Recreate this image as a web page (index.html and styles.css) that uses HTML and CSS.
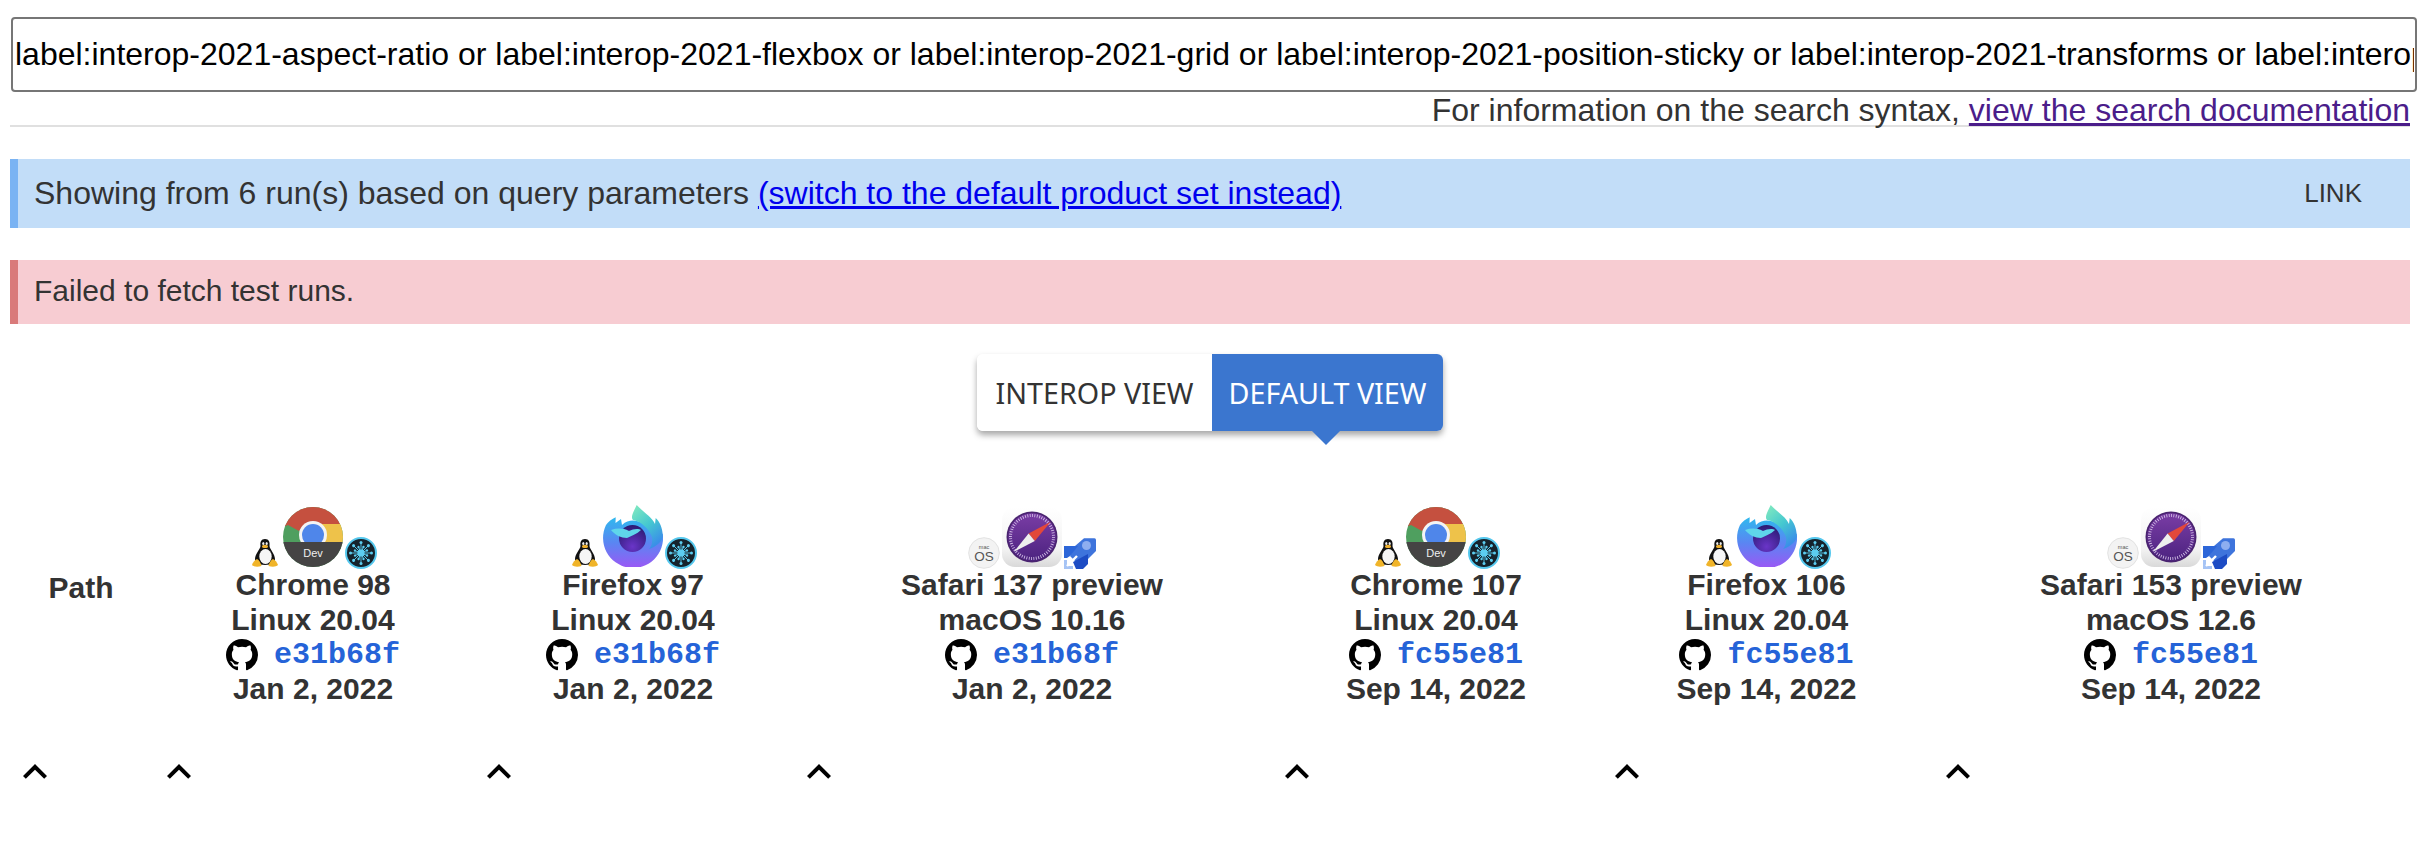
FILE: index.html
```html
<!DOCTYPE html>
<html lang="en">
<head>
<meta charset="utf-8">
<title>web-platform-tests dashboard</title>
<link rel="stylesheet" href="styles.css">
</head>
<body>
<svg class="sprite" aria-hidden="true">
  <defs>
    <linearGradient id="ffBody" x1="0" y1="0" x2="0" y2="1"><stop offset="0" stop-color="#2fb9ee"/><stop offset=".5" stop-color="#5a86f2"/><stop offset="1" stop-color="#9a58f5"/></linearGradient>
    <linearGradient id="ffFlame" x1="0" y1="0" x2=".6" y2="1"><stop offset="0" stop-color="#86ecbe"/><stop offset=".55" stop-color="#45c8d0"/><stop offset="1" stop-color="#3a8fe8"/></linearGradient>
    <radialGradient id="ffGlobe" cx=".5" cy=".8" r=".8"><stop offset="0" stop-color="#6a35c8"/><stop offset="1" stop-color="#2a1a72"/></radialGradient>
    <linearGradient id="sfTile" x1="0" y1="0" x2="0" y2="1"><stop offset="0" stop-color="#ffffff"/><stop offset=".7" stop-color="#f3f3f3"/><stop offset="1" stop-color="#d9d9d9"/></linearGradient>
    <linearGradient id="sfDisc" x1="0" y1="0" x2="0" y2="1"><stop offset="0" stop-color="#7a3da5"/><stop offset="1" stop-color="#4c2380"/></linearGradient>
    <clipPath id="chClip"><circle cx="30" cy="30" r="30"/></clipPath>
    <clipPath id="chBlue"><rect x="0" y="0" width="60" height="35"/></clipPath>
    <g id="tcSpoke"><line x1="16" y1="16" x2="16" y2="5.5" stroke="#5ccdf0" stroke-width=".9"/><circle cx="16" cy="5.5" r="1.5" fill="#5ccdf0"/></g>
    <g id="tcSpokeShort"><line x1="16" y1="16" x2="16" y2="9.5" stroke="#5ccdf0" stroke-width=".9"/><circle cx="16" cy="9.5" r="1.2" fill="#5ccdf0"/></g>
  </defs>
  <symbol id="i-tux" viewBox="0 0 32 32">
    <path d="M16 2C12 2 11 5 11.5 9C11.5 12 6 17 6 22C6 25 9 28 16 28C23 28 26 25 26 22C26 17 20.5 12 20.5 9C21 5 20 2 16 2Z" fill="#111"/>
    <ellipse cx="16.5" cy="19.5" rx="6.2" ry="7.6" fill="#f6f6f6"/>
    <ellipse cx="14.3" cy="6.4" rx="1.1" ry="1.5" fill="#eee"/>
    <ellipse cx="17.7" cy="6.4" rx="1.1" ry="1.5" fill="#eee"/>
    <ellipse cx="16" cy="9.4" rx="3" ry="1.6" fill="#eeb02f"/>
    <path d="M3 28C4 25 6 23 8 22C10 23 12 26 12.5 29C9 30 5 30 3 28Z" fill="#f0b429"/>
    <path d="M29 28C28 25 26 23 24 22C22 23 20 26 19.5 29C23 30 27 30 29 28Z" fill="#f0b429"/>
  </symbol>
  <symbol id="i-taskcluster" viewBox="0 0 32 32">
    <circle cx="16" cy="16" r="15" fill="#16232c" stroke="#55c8ee" stroke-width="2"/>
    <use href="#tcSpoke"/>
    <use href="#tcSpoke" transform="rotate(45 16 16)"/>
    <use href="#tcSpoke" transform="rotate(90 16 16)"/>
    <use href="#tcSpoke" transform="rotate(135 16 16)"/>
    <use href="#tcSpoke" transform="rotate(180 16 16)"/>
    <use href="#tcSpoke" transform="rotate(225 16 16)"/>
    <use href="#tcSpoke" transform="rotate(270 16 16)"/>
    <use href="#tcSpoke" transform="rotate(315 16 16)"/>
    <use href="#tcSpokeShort" transform="rotate(22 16 16)"/>
    <use href="#tcSpokeShort" transform="rotate(67 16 16)"/>
    <use href="#tcSpokeShort" transform="rotate(112 16 16)"/>
    <use href="#tcSpokeShort" transform="rotate(157 16 16)"/>
    <use href="#tcSpokeShort" transform="rotate(202 16 16)"/>
    <use href="#tcSpokeShort" transform="rotate(247 16 16)"/>
    <use href="#tcSpokeShort" transform="rotate(292 16 16)"/>
    <use href="#tcSpokeShort" transform="rotate(337 16 16)"/>
    <circle cx="16" cy="16" r="3.6" fill="#5ccdf0"/>
  </symbol>
  <symbol id="i-chrome" viewBox="0 0 60 60">
    <g clip-path="url(#chClip)">
      <rect width="60" height="60" fill="#4f9f5f"/>
      <path d="M30 17H60V35H30Z" fill="#eec24a"/>
      <path d="M0 0H60V17H30L18 22L16 24L5 18L0 20Z" fill="#c5503f"/>
      <rect y="35" width="60" height="25" fill="#454444"/>
      <g clip-path="url(#chBlue)">
        <circle cx="30" cy="28" r="14" fill="#f4f4f4"/>
        <circle cx="30" cy="28" r="11" fill="#4f86ea"/>
      </g>
    </g>
  </symbol>
  <symbol id="i-firefox" viewBox="0 0 60 62">
    <path d="M3 20C5 17 9 14 12.7 12.3L12.5 18L18 14L19 20C24 15 30 15 34 16L47 20L59.8 29A30 30 0 1 1 3 20Z" fill="url(#ffBody)"/>
    <path d="M33.7 0C31 6 27 12 30 15C38 16 46 24 49 32C50 37 48 42 46 44C52 42 58 38 59.7 32C60 24 57 17 52.7 13L52 19C49 12 40 7 33.7 0Z" fill="url(#ffFlame)"/>
    <circle cx="29.5" cy="33.5" r="13.5" fill="url(#ffGlobe)"/>
    <path d="M8 25C14 23 20 23 26 26C30 24 35 23 38 25C34 29 28 31 24 33C18 33 12 30 8 25Z" fill="#5fd6ea"/>
  </symbol>
  <symbol id="i-safari" viewBox="0 0 60 60">
    <rect width="60" height="60" rx="13" fill="url(#sfTile)"/>
    <circle cx="30" cy="30" r="25.5" fill="#4a2470"/>
    <circle cx="30" cy="30" r="23.8" fill="url(#sfDisc)"/>
    <circle class="safari-ticks" cx="30" cy="30" r="21.5"/>
    <path d="M48.7 14.7L26.6 26.5L32.8 34Z" fill="#e2483a"/>
    <path d="M12 44.7L26.6 26.5L32.8 34Z" fill="#eeeeee"/>
  </symbol>
  <symbol id="i-macos" viewBox="0 0 32 32">
    <circle cx="16" cy="16" r="15.3" fill="#f3f3f3" stroke="#e2e2e2"/>
  </symbol>
  <symbol id="i-azure" viewBox="0 0 32 32">
    <path d="M20 1.3H30.5Q32 1.3 32 3V14L24 22L14 27L6 19L11 9Z" fill="#3e74dc"/>
    <path d="M0 9H14L6 19L3 21H0Z" fill="#2d66d8"/>
    <path d="M24 17V27L19 32H12L9 25Z" fill="#1d4cc4"/>
    <circle cx="22.5" cy="8.5" r="4.5" fill="#8eaef0"/>
    <path d="M0 23H3V29H9V32H0Z" fill="#a6c4f5"/>
    <path d="M3 29L13 19" stroke="#ffffff" stroke-width="2.4" fill="none"/>
  </symbol>
  <symbol id="i-github" viewBox="0 0 16 16">
    <path d="M8 0C3.58 0 0 3.58 0 8c0 3.54 2.29 6.53 5.47 7.59.4.07.55-.17.55-.38 0-.19-.01-.82-.01-1.49-2.01.37-2.53-.49-2.69-.94-.09-.23-.48-.94-.82-1.13-.28-.15-.68-.52-.01-.53.63-.01 1.08.58 1.23.82.72 1.21 1.87.87 2.33.66.07-.52.28-.87.51-1.07-1.78-.2-3.64-.89-3.64-3.95 0-.87.31-1.59.82-2.15-.08-.2-.36-1.02.08-2.12 0 0 .67-.21 2.2.82.64-.18 1.32-.27 2-.27.68 0 1.36.09 2 .27 1.53-1.04 2.2-.82 2.2-.82.44 1.1.16 1.92.08 2.12.51.56.82 1.27.82 2.15 0 3.07-1.87 3.75-3.65 3.95.29.25.54.73.54 1.48 0 1.07-.01 1.93-.01 2.2 0 .21.15.46.55.38A8.013 8.013 0 0016 8c0-4.42-3.58-8-8-8z" fill="#000"/>
  </symbol>
  <symbol id="i-up" viewBox="0 0 24 24">
    <path d="M12 8l-6 6 1.41 1.41L12 10.83l4.59 4.58L18 14z" fill="#000"/>
  </symbol>
</svg>

<main class="page">
  <section class="search">
    <input class="search-input" type="text" value="label:interop-2021-aspect-ratio or label:interop-2021-flexbox or label:interop-2021-grid or label:interop-2021-position-sticky or label:interop-2021-transforms or label:interop-2021-subgrid or label:interop-2021-scrolling">
    <p class="search-help">For information on the search syntax, <a class="visited" href="#docs">view the search documentation</a></p>
  </section>

  <div class="alert alert-info">
    <span>Showing from 6 run(s) based on query parameters <a class="unvisited" href="#default">(switch to the default product set instead)</a></span>
    <span class="alert-action">LINK</span>
  </div>

  <div class="alert alert-error">Failed to fetch test runs.</div>

  <div class="toggle-row">
    <div class="toggle">
      <button class="toggle-btn" type="button">INTEROP VIEW</button>
      <button class="toggle-btn is-active" type="button">DEFAULT VIEW</button>
    </div>
  </div>

  <table class="runs">
    <colgroup>
      <col class="c-path"><col class="c-320"><col class="c-320"><col class="c-478"><col class="c-330"><col class="c-331"><col class="c-478">
    </colgroup>
    <thead>
      <tr>
        <th class="path-head">Path</th>
        <th class="run">
          <div class="icons"><svg class="ic"><use href="#i-tux"/></svg><svg class="ic-main" viewBox="0 0 60 60"><use href="#i-chrome"/><text class="icon-dev" x="30" y="50" text-anchor="middle">Dev</text></svg><svg class="ic"><use href="#i-taskcluster"/></svg></div>
          <div>Chrome 98</div><div>Linux 20.04</div>
          <div class="rev"><svg class="gh"><use href="#i-github"/></svg><a class="sha" href="#e31b68f">e31b68f</a></div>
          <div>Jan 2, 2022</div>
        </th>
        <th class="run">
          <div class="icons"><svg class="ic"><use href="#i-tux"/></svg><svg class="ic-main ic-tall"><use href="#i-firefox"/></svg><svg class="ic"><use href="#i-taskcluster"/></svg></div>
          <div>Firefox 97</div><div>Linux 20.04</div>
          <div class="rev"><svg class="gh"><use href="#i-github"/></svg><a class="sha" href="#e31b68f">e31b68f</a></div>
          <div>Jan 2, 2022</div>
        </th>
        <th class="run">
          <div class="icons"><svg class="ic" viewBox="0 0 32 32"><use href="#i-macos"/><text class="icon-mac" x="16" y="12" text-anchor="middle">mac</text><text class="icon-os" x="16" y="24" text-anchor="middle">OS</text></svg><svg class="ic-main"><use href="#i-safari"/></svg><svg class="ic"><use href="#i-azure"/></svg></div>
          <div>Safari 137 preview</div><div>macOS 10.16</div>
          <div class="rev"><svg class="gh"><use href="#i-github"/></svg><a class="sha" href="#e31b68f">e31b68f</a></div>
          <div>Jan 2, 2022</div>
        </th>
        <th class="run">
          <div class="icons"><svg class="ic"><use href="#i-tux"/></svg><svg class="ic-main" viewBox="0 0 60 60"><use href="#i-chrome"/><text class="icon-dev" x="30" y="50" text-anchor="middle">Dev</text></svg><svg class="ic"><use href="#i-taskcluster"/></svg></div>
          <div>Chrome 107</div><div>Linux 20.04</div>
          <div class="rev"><svg class="gh"><use href="#i-github"/></svg><a class="sha" href="#fc55e81">fc55e81</a></div>
          <div>Sep 14, 2022</div>
        </th>
        <th class="run">
          <div class="icons"><svg class="ic"><use href="#i-tux"/></svg><svg class="ic-main ic-tall"><use href="#i-firefox"/></svg><svg class="ic"><use href="#i-taskcluster"/></svg></div>
          <div>Firefox 106</div><div>Linux 20.04</div>
          <div class="rev"><svg class="gh"><use href="#i-github"/></svg><a class="sha" href="#fc55e81">fc55e81</a></div>
          <div>Sep 14, 2022</div>
        </th>
        <th class="run">
          <div class="icons"><svg class="ic" viewBox="0 0 32 32"><use href="#i-macos"/><text class="icon-mac" x="16" y="12" text-anchor="middle">mac</text><text class="icon-os" x="16" y="24" text-anchor="middle">OS</text></svg><svg class="ic-main"><use href="#i-safari"/></svg><svg class="ic"><use href="#i-azure"/></svg></div>
          <div>Safari 153 preview</div><div>macOS 12.6</div>
          <div class="rev"><svg class="gh"><use href="#i-github"/></svg><a class="sha" href="#fc55e81">fc55e81</a></div>
          <div>Sep 14, 2022</div>
        </th>
      </tr>
    </thead>
    <tbody>
      <tr>
        <td class="sort"><svg class="up"><use href="#i-up"/></svg></td>
        <td class="sort"><svg class="up"><use href="#i-up"/></svg></td>
        <td class="sort"><svg class="up"><use href="#i-up"/></svg></td>
        <td class="sort"><svg class="up"><use href="#i-up"/></svg></td>
        <td class="sort"><svg class="up"><use href="#i-up"/></svg></td>
        <td class="sort"><svg class="up"><use href="#i-up"/></svg></td>
        <td class="sort"><svg class="up"><use href="#i-up"/></svg></td>
      </tr>
    </tbody>
  </table>
</main>
</body>
</html>
```

FILE: styles.css
```css
* { box-sizing: border-box; }

html, body {
  margin: 0;
  background: #fff;
}

body {
  font-family: "Liberation Sans", Arial, sans-serif;
  color: #333;
  font-size: 30px;
  overflow: hidden;
}

.sprite {
  position: absolute;
  width: 0;
  height: 0;
  overflow: hidden;
}

.page {
  width: 2410px;
  padding: 17px 0 0 10px;
}

.search {
  border-bottom: 2px solid #e0e0e0;
  height: 110px;
}

.search-input {
  display: block;
  width: 2406px;
  height: 75px;
  margin: 0 0 0 1px;
  padding: 0 1px 0 2px;
  border: 2px solid #767676;
  border-radius: 4px;
  background: #fff;
  color: #000;
  font-family: "Liberation Sans", Arial, sans-serif;
  font-size: 32px;
}

.search-help {
  margin: 0 0 -3px;
  text-align: right;
  font-size: 32px;
  line-height: 37px;
}

.visited { color: #4b1d8a; }
.unvisited { color: #0000ee; }

.alert {
  display: flex;
  align-items: center;
  justify-content: space-between;
  font-size: 32px;
}

.alert-info {
  height: 69px;
  margin-top: 32px;
  padding: 0 48px 0 16px;
  background: #c2ddf8;
  border-left: 8px solid #7ab3f3;
}

.alert-error {
  height: 64px;
  margin-top: 32px;
  padding: 0 16px 2px;
  font-size: 30px;
  background: #f7ccd2;
  border-left: 8px solid #d97a7a;
}

.alert-action {
  font-size: 26px;
}

.toggle-row {
  display: flex;
  justify-content: center;
  margin-top: 30px;
}

.toggle {
  display: flex;
  height: 77px;
  border-radius: 6px;
  box-shadow: 0 4px 6px rgba(0, 0, 0, .35);
}

.toggle-btn {
  position: relative;
  border: 0;
  padding: 0;
  width: 235px;
  background: #fff;
  color: #333;
  font-family: "Noto Sans", sans-serif;
  font-size: 28.7px;
  border-radius: 6px 0 0 6px;
}

.toggle-btn.is-active {
  width: 231px;
  background: #3b76cf;
  color: #fff;
  border-radius: 0 6px 6px 0;
}

.toggle-btn.is-active::after {
  content: "";
  position: absolute;
  left: 100px;
  top: 77px;
  border-left: 14px solid transparent;
  border-right: 14px solid transparent;
  border-top: 14px solid #3b76cf;
}

.runs {
  width: 2401px;
  margin: 43px 0 0 -1px;
  border-collapse: collapse;
  table-layout: fixed;
}

.c-path { width: 144px; }
.c-320 { width: 320px; }
.c-478 { width: 478px; }
.c-330 { width: 330px; }
.c-331 { width: 331px; }

.runs th {
  padding: 0;
  font-size: 30px;
  line-height: 34.5px;
  font-weight: 700;
  text-align: center;
  vertical-align: middle;
}

.runs th.path-head {
  padding-bottom: 3px;
}

.runs th.run {
  padding-top: 31px;
}

.icons {
  display: flex;
  justify-content: center;
  align-items: flex-end;
  gap: 2px;
  height: 64px;
  margin-bottom: -1px;
}

.ic {
  width: 32px;
  height: 32px;
}

.ic-main {
  width: 60px;
  height: 60px;
  margin-bottom: 2px;
}

.ic-tall { height: 62px; }

.rev {
  display: flex;
  justify-content: center;
  gap: 16px;
  height: 34.5px;
}

.gh {
  width: 32px;
  height: 32px;
  margin-top: 2px;
}

.sha {
  margin-top: 1px;
  font-family: "Liberation Mono", "Courier New", monospace;
  font-weight: 700;
  color: #2563d8;
  text-decoration: none;
}

.icon-dev {
  font-family: "Liberation Sans", Arial, sans-serif;
  font-size: 11px;
  font-weight: 400;
  fill: #f0f0f0;
}

.icon-mac {
  font-family: "Liberation Sans", Arial, sans-serif;
  font-size: 5.5px;
  font-weight: 400;
  fill: #555;
}

.icon-os {
  font-family: "Liberation Sans", Arial, sans-serif;
  font-size: 13.5px;
  font-weight: 400;
  fill: #555;
}

.safari-ticks {
  fill: none;
  stroke: #d9c8ea;
  stroke-width: 3;
  stroke-dasharray: 0.8 1.6;
}

.sort {
  padding: 42px 0 0 2px;
  line-height: 0;
}

.up {
  width: 48px;
  height: 48px;
}
```
